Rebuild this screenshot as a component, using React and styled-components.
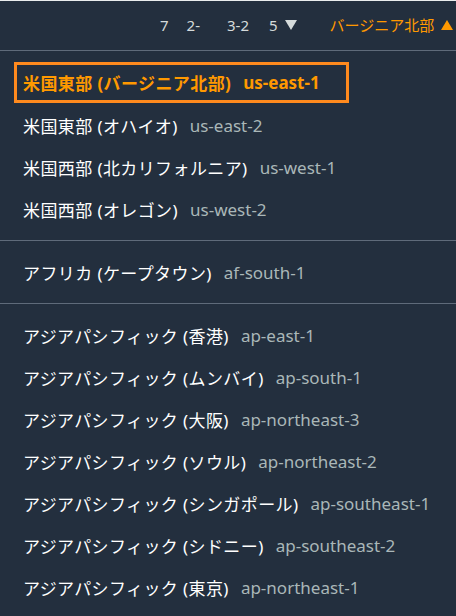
import React from 'react';
import styled, { createGlobalStyle } from 'styled-components';

const GlobalStyle = createGlobalStyle`
  html, body {
    margin: 0;
    padding: 0;
    background: #232f3e;
    overflow: hidden;
  }
`;

const groups = [
  [
    { name: '米国東部 (バージニア北部)', code: 'us-east-1', selected: true },
    { name: '米国東部 (オハイオ)', code: 'us-east-2' },
    { name: '米国西部 (北カリフォルニア)', code: 'us-west-1' },
    { name: '米国西部 (オレゴン)', code: 'us-west-2' },
  ],
  [{ name: 'アフリカ (ケープタウン)', code: 'af-south-1' }],
  [
    { name: 'アジアパシフィック (香港)', code: 'ap-east-1' },
    { name: 'アジアパシフィック (ムンバイ)', code: 'ap-south-1' },
    { name: 'アジアパシフィック (大阪)', code: 'ap-northeast-3' },
    { name: 'アジアパシフィック (ソウル)', code: 'ap-northeast-2' },
    { name: 'アジアパシフィック (シンガポール)', code: 'ap-southeast-1' },
    { name: 'アジアパシフィック (シドニー)', code: 'ap-southeast-2' },
    { name: 'アジアパシフィック (東京)', code: 'ap-northeast-1' },
  ],
];

const App = () => (
  <Page>
    <GlobalStyle />
    <TopStrip />
    <Header>
      <Crumb $gap={0}>7</Crumb>
      <Crumb $gap={18}>2-</Crumb>
      <Crumb $gap={27}>3-2</Crumb>
      <Crumb $gap={20}>5</Crumb>
      <Caret $gap={7} />
      <RegionToggle>
        バージニア北部
        <Caret $up $orange $gap={7} />
      </RegionToggle>
    </Header>
    <Menu>
      {groups.map((group, gi) => (
        <Group key={gi}>
          {group.map((r) => (
            <Item key={r.code} $selected={r.selected}>
              <Name>{r.name}</Name>
              <Code $selected={r.selected}>{r.code}</Code>
            </Item>
          ))}
        </Group>
      ))}
    </Menu>
  </Page>
);

const Page = styled.div`
  width: 456px;
  height: 616px;
  background: #232f3e;
  font-family: "Noto Sans", "Noto Sans CJK JP", sans-serif;
  color: #ffffff;
  overflow: hidden;
`;

const TopStrip = styled.div`
  height: 1px;
  background: #eaeded;
`;

const Header = styled.div`
  height: 50px;
  border-bottom: 1px solid #5f6b7a;
  display: flex;
  align-items: center;
  padding: 0 0 2px 160px;
  box-sizing: border-box;
  font-size: 15px;
  color: #d5dbdb;
  white-space: nowrap;
`;

const Crumb = styled.span`
  margin-left: ${(p) => p.$gap}px;
`;

const Caret = styled.span`
  display: inline-block;
  flex-shrink: 0;
  width: 0;
  height: 0;
  margin-left: ${(p) => p.$gap}px;
  border-left: 6.5px solid transparent;
  border-right: 6.5px solid transparent;
  ${(p) => (p.$up
    ? `border-bottom: 10px solid ${p.$orange ? '#ff9900' : '#d5dbdb'};`
    : `border-top: 10px solid ${p.$orange ? '#ff9900' : '#d5dbdb'};`)}
`;

const RegionToggle = styled.span`
  display: flex;
  align-items: center;
  margin-left: 33px;
  color: #ff9900;
`;

const Menu = styled.div`
  padding-top: 11px;
`;

const Group = styled.div`
  padding-bottom: 10px;
  & + & {
    border-top: 1px solid #5f6b7a;
    padding-top: 10px;
  }
`;

const Item = styled.div`
  height: 42px;
  display: flex;
  align-items: center;
  box-sizing: border-box;
  font-size: 17px;
  padding-left: 23px;
  ${(p) => p.$selected && `
    height: 41px;
    margin: 0 107px 1px 14px;
    padding-left: 6px;
    border: 3px solid #ff8a1e;
    font-weight: 700;
    color: #ff9900;
  `}
`;

const Name = styled.span`
  white-space: nowrap;
  letter-spacing: 0.4px;
`;

const Code = styled.span`
  margin-left: 12px;
  color: ${(p) => (p.$selected ? '#ff9900' : '#aab7b8')};
  white-space: nowrap;
`;

export default App;
